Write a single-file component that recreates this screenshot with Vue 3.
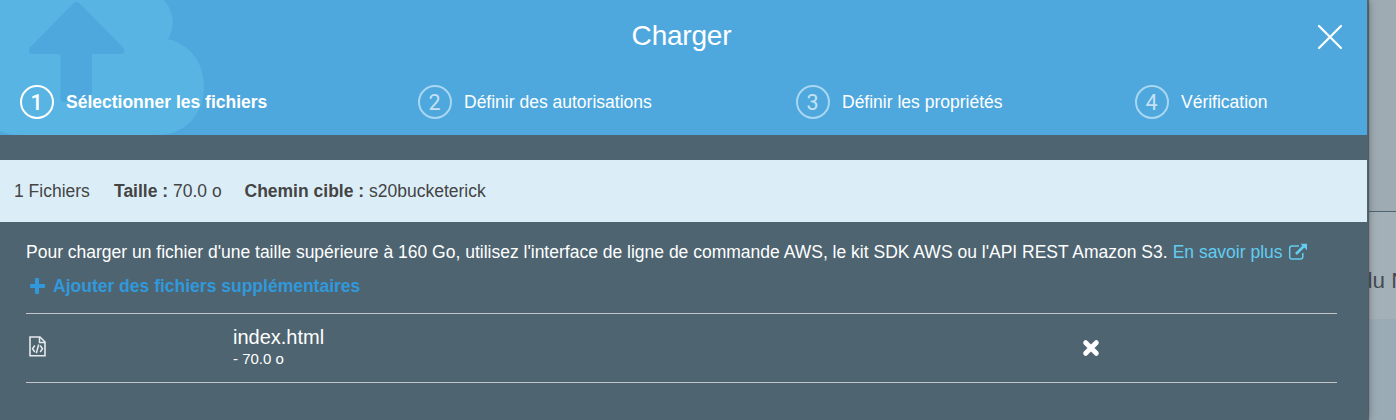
<script setup>
const steps = [
  { n: 1, label: 'Sélectionner les fichiers', active: true },
  { n: 2, label: 'Définir des autorisations' },
  { n: 3, label: 'Définir les propriétés' },
  { n: 4, label: 'Vérification' },
]
</script>

<template>
  <div class="page">
    <main class="modal">
      <header class="header">
        <svg class="cloud" width="206" height="135" viewBox="0 0 206 135">
          <path fill="#58b4e3" d="M0 0H164C175 13 175 28 168 39C191 45 204 63 204 87C204 114 185 135 158 135H18Q8 135 0 131Z" />
          <path fill="#4ea8dd" d="M73.500 3.200Q76.500 .8 79.500 3.200L123.500 48Q126 54 121 54H92V98Q92 102 88 102H64Q60.500 102 60.500 98V54H32Q27 53 29.500 48Z" />
        </svg>
        <h1 class="title">Charger</h1>
        <svg class="close" width="26" height="26" viewBox="0 0 26 26">
          <path d="M2 2 24 24M24 2 2 24" stroke="#fff" stroke-width="2.200" stroke-linecap="round" />
        </svg>
        <nav class="steps">
          <div v-for="s in steps" :key="s.n" class="step" :class="{ active: s.active }">
            <span class="num">{{ s.n }}</span><span class="label">{{ s.label }}</span>
          </div>
        </nav>
      </header>
      <section class="summary">
        <span class="count">1 Fichiers</span>
        <span class="size"><b>Taille :</b> 70.0 o</span>
        <span class="target"><b>Chemin cible :</b> s20bucketerick</span>
      </section>
      <section class="body">
        <p class="info">
          <span class="info-text">Pour charger un fichier d'une taille supérieure à 160 Go, utilisez l'interface de ligne de commande AWS, le kit SDK AWS ou l'API REST Amazon S3.</span>
          <a class="more">En savoir plus</a>
          <svg class="ext" width="20" height="18" viewBox="0 0 20 18" fill="none" stroke="#62cdf1">
            <path d="M11 3H4Q1.700 3 1.700 5.300V13.700Q1.700 16 4 16H12.500Q14.800 16 14.800 13.700V10" stroke-width="1.500" />
            <path d="M8 11 16 3" stroke-width="2.600" />
            <path d="M12.500.8H19V7.300Z" fill="#62cdf1" stroke="none" />
          </svg>
        </p>
        <div class="add">
          <svg width="16" height="16" viewBox="0 0 16 16"><path d="M6 1Q6 0 7 0H9Q10 0 10 1V6H15Q16 6 16 7V9Q16 10 15 10H10V15Q10 16 9 16H7Q6 16 6 15V10H2Q1 10 1 9V7Q1 6 2 6H6Z" fill="#3199db" /></svg>
          <span>Ajouter des fichiers supplémentaires</span>
        </div>
        <div class="file">
          <svg class="doc" width="18" height="21" viewBox="0 0 18 21" fill="none" stroke="#e6e9eb">
            <path d="M2 1H12L17 6V19.700H2Z" stroke-width="1.600" />
            <path d="M11.500 1V6.500H17" stroke-width="1.500" />
            <path d="M6.800 9.500 4.500 12.700 6.800 16M12.200 9.500 14.500 12.700 12.200 16M10.700 8.500 8.300 17.300" stroke-width="1.500" />
          </svg>
          <div class="meta">
            <div class="name">index.html</div>
            <div class="bytes">- 70.0 o</div>
          </div>
          <svg class="remove" width="18" height="18" viewBox="0 0 18 18"><path d="M3.700 3.700 14.300 14.300M14.300 3.700 3.700 14.300" stroke="#fff" stroke-width="5" stroke-linecap="round" /></svg>
        </div>
      </section>
    </main>
    <aside class="backdrop">
      <div class="top"></div>
      <div class="middle"><span>du N</span></div>
      <div class="bottom"></div>
    </aside>
  </div>
</template>

<style>
body { margin: 0; overflow: hidden; }
</style>
<style scoped>
.page { display: flex; width: 1396px; height: 420px; overflow: hidden; font: 17.5px/20px "Liberation Sans", Arial, sans-serif; color: #fff; white-space: nowrap; }
.modal { width: 1368px; height: 420px; flex: none; background: #4e6471; box-shadow: 0 0 8px rgba(0,0,0,.4), 0 0 1px 1px #6b7075; position: relative; z-index: 1; }
.header { height: 135px; width: 1367px; background: #4ea8dd; position: relative; box-sizing: border-box; padding-top: 20px; }
.cloud { position: absolute; left: 0; top: 0; }
.title { position: relative; margin: 0; padding-right: 4px; text-align: center; font-size: 28px; line-height: 32px; font-weight: 400; letter-spacing: -.2px; }
.close { position: absolute; left: 1317px; top: 24px; }
.steps { position: relative; display: grid; grid-template-columns: 398px 378px 339px 1fr; margin: 33px 0 0 19.5px; }
.step { display: flex; align-items: center; }
.num { box-sizing: border-box; width: 34px; height: 34px; border: 2px solid #a9d6f0; border-radius: 50%; text-align: center; font-family: Roboto, sans-serif; font-size: 21.5px; line-height: 32px; color: #c5e2f4; margin-right: 12.5px; }
.active .num { border-color: #fff; font-weight: 500; color: #fff; }
.active .label { font-weight: 700; }
.summary { margin-top: 25px; width: 1367px; height: 62px; background: #dbeef8; color: #444; display: flex; align-items: center; padding-left: 14px; box-sizing: border-box; }
.count { width: 100px; }
.size { width: 130.5px; }
.body { padding: 20px 31px 0 26px; }
.info { margin: 0; display: flex; align-items: center; height: 20px; }
.more { color: #62cdf1; margin-left: 5px; }
.ext { flex: none; margin-left: 5px; }
.add { display: flex; align-items: center; height: 20px; margin: 14px 0 17px 3px; color: #3199db; font-weight: 700; }
.add svg { margin-right: 8px; }
.file { height: 70px; box-sizing: border-box; border-top: 1px solid #c0c5c8; border-bottom: 1px solid #c0c5c8; display: flex; align-items: center; }
.doc { margin: -3px 0 0 2px; }
.meta { margin: 0 0 0 187px; width: 849px; }
.name { font-size: 20px; line-height: 21px; }
.bytes { font-size: 15px; line-height: 21px; }
.backdrop { flex: 1; min-width: 0; background: #9eabb3; }
.top { height: 211px; border-bottom: 1px solid #4e6471; }
.middle { height: 107px; background: #a3b0b7; color: #454b52; overflow: hidden; }
.middle span { display: block; margin: 55px 0 0 -8px; font-size: 22.5px; line-height: 28px; }
.bottom { height: 101px; background: #9aabb6; }
</style>
